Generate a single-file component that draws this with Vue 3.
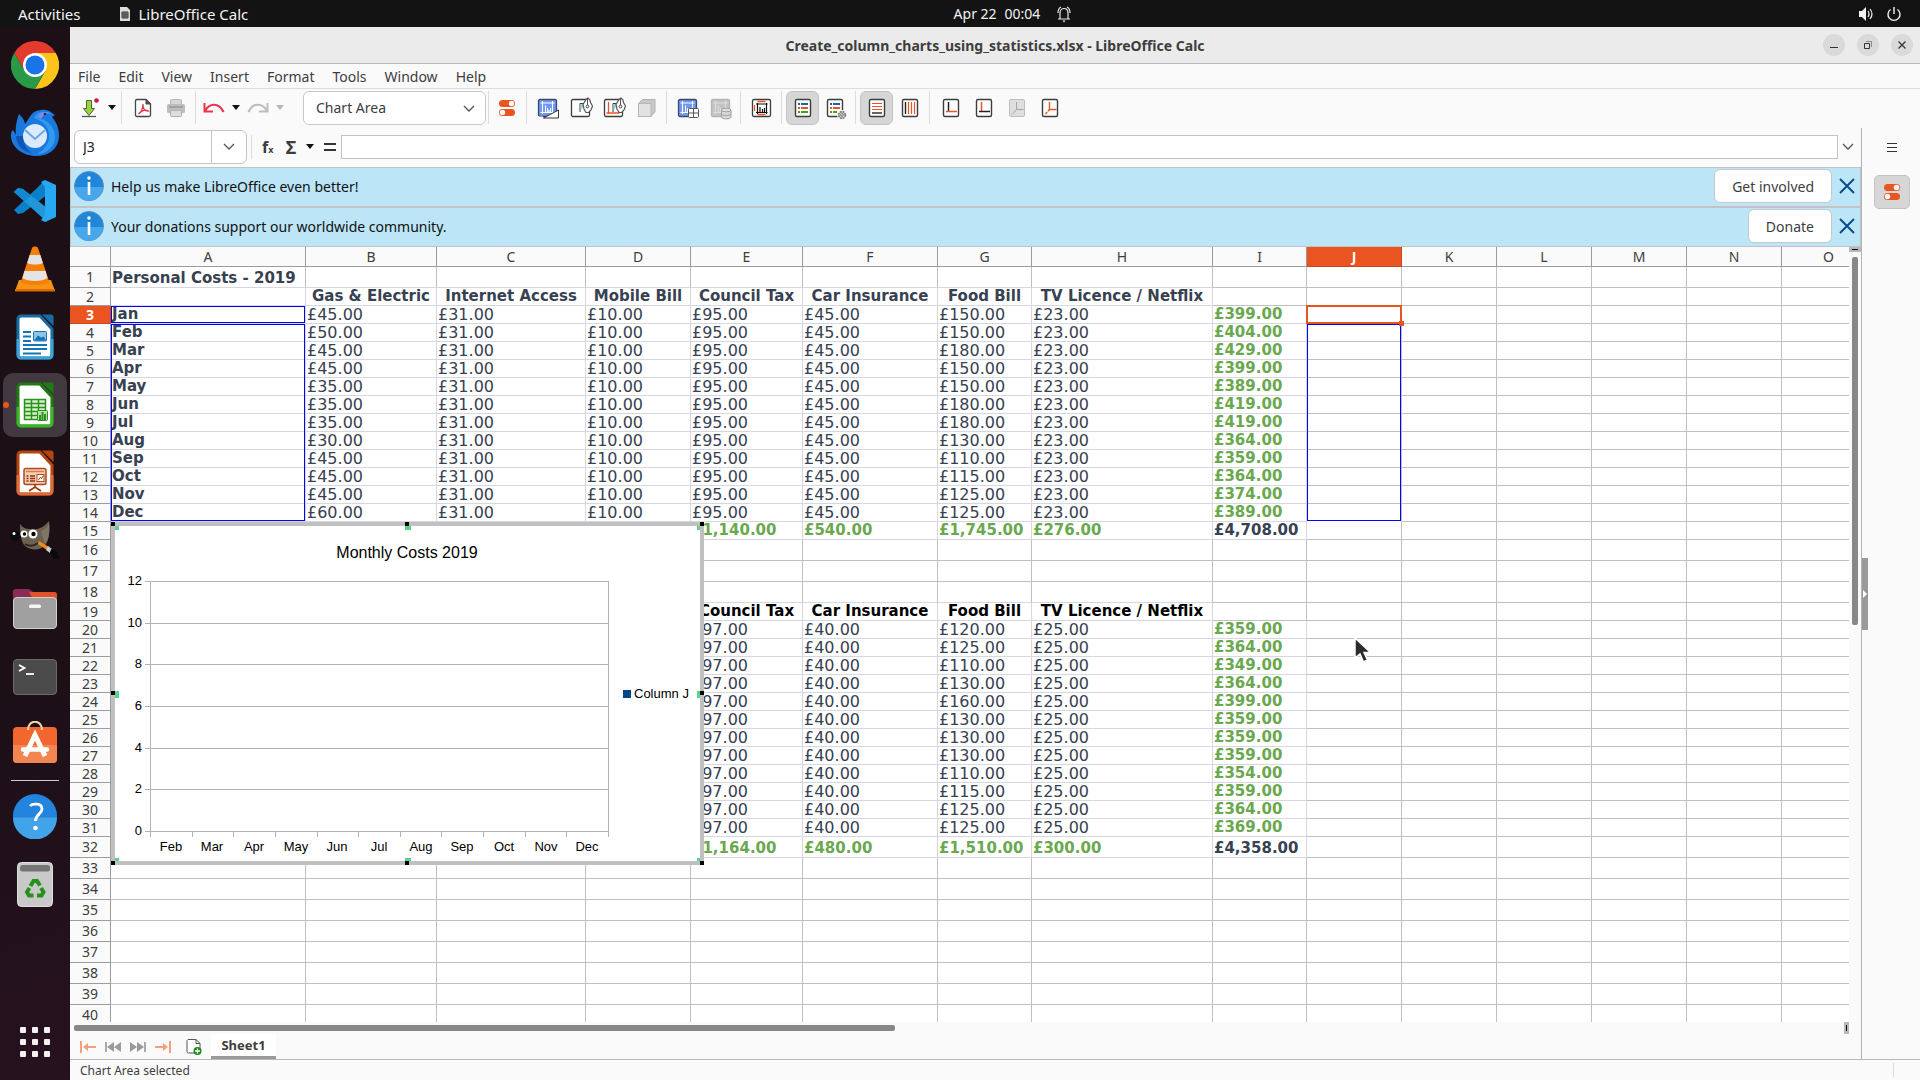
<script setup>
import { ref } from 'vue'

const cols = [
  { id: 'A', w: 195 }, { id: 'B', w: 131 }, { id: 'C', w: 149 }, { id: 'D', w: 105 },
  { id: 'E', w: 112 }, { id: 'F', w: 135 }, { id: 'G', w: 94 }, { id: 'H', w: 181 },
  { id: 'I', w: 94 }, { id: 'J', w: 95 }, { id: 'K', w: 95 }, { id: 'L', w: 95 },
  { id: 'M', w: 95 }, { id: 'N', w: 95 }, { id: 'O', w: 0 },
]

const months = ['Jan', 'Feb', 'Mar', 'Apr', 'May', 'Jun', 'Jul', 'Aug', 'Sep', 'Oct', 'Nov', 'Dec']
const gas = [45, 50, 45, 45, 35, 35, 35, 30, 45, 45, 45, 60]
const food2019 = [150, 150, 180, 150, 150, 180, 180, 130, 110, 115, 125, 125]
const total2019 = [399, 404, 429, 399, 389, 419, 419, 364, 359, 364, 374, 389]
const food2020 = [120, 125, 110, 130, 160, 130, 130, 130, 110, 115, 125, 125]
const total2020 = [359, 364, 349, 364, 399, 359, 359, 359, 354, 359, 364, 369]
const money = (n) => '£' + n.toLocaleString('en-GB') + '.00'

const sheet = {}
const put = (row, col, text, kind) => { sheet[col + row] = { text, kind } }

put(1, 'A', 'Personal Costs - 2019', 'strong')
const heads = { B: 'Gas & Electric', C: 'Internet Access', D: 'Mobile Bill', E: 'Council Tax', F: 'Car Insurance', G: 'Food Bill', H: 'TV Licence / Netflix' }
for (const c in heads) {
  put(2, c, heads[c], 'head')
  if (c >= 'E') put(19, c, heads[c], 'head black')
}
months.forEach((m, i) => {
  const r = i + 3
  put(r, 'A', m, 'strong')
  put(r, 'B', money(gas[i]))
  put(r, 'C', money(31))
  put(r, 'D', money(10))
  put(r, 'E', money(95))
  put(r, 'F', money(45))
  put(r, 'G', money(food2019[i]))
  put(r, 'H', money(23))
  put(r, 'I', money(total2019[i]), 'sum')
  const s = i + 20
  put(s, 'E', money(97))
  put(s, 'F', money(40))
  put(s, 'G', money(food2020[i]))
  put(s, 'H', money(25))
  put(s, 'I', money(total2020[i]), 'sum')
})
;[[15, 1140, 540, 1745, 276, 4708], [32, 1164, 480, 1510, 300, 4358]].forEach(([r, e, f, g, h, i]) => {
  put(r, 'E', money(e), 'sum')
  put(r, 'F', money(f), 'sum')
  put(r, 'G', money(g), 'sum')
  put(r, 'H', money(h), 'sum')
  put(r, 'I', money(i), 'strong')
})

const tall = (r) => r === 1 || (r >= 16 && r <= 18) || r >= 32
const cellClass = (r, c) => {
  const out = [sheet[c + r]?.kind]
  const body = (r >= 2 && r <= 15) || (r >= 19 && r <= 32)
  if ((c <= 'H' && body) || (c === 'I' && body && r !== 2 && r !== 19)) out.push('ruled')
  else if (c <= 'H' && (r === 1 || r === 18)) out.push('ruled-under')
  if (c === 'J' && r === 14) out.push('open-under')
  return out
}

const activeRow = 3
const activeCol = 'J'
const nameBox = ref('J3')
const formula = ref('')
const element = ref('Chart Area')

const menus = ['File', 'Edit', 'View', 'Insert', 'Format', 'Tools', 'Window', 'Help']
const notices = [
  { text: 'Help us make LibreOffice even better!', action: 'Get involved' },
  { text: 'Your donations support our worldwide community.', action: 'Donate' },
]

const plot = { left: 39, top: 59, right: 497, bottom: 309 }
const yTicks = [0, 2, 4, 6, 8, 10, 12].map((v) => ({ v, y: Math.round(plot.bottom - (v * (plot.bottom - plot.top)) / 12) }))
const step = (plot.right - plot.left) / 11
const xLabels = months.slice(1).map((m, i) => ({ m, x: Math.round(plot.left + step * (i + 0.5)) }))
const xTicks = Array.from({ length: 12 }, (_, i) => Math.round(plot.left + step * i))
const grips = ['tl', 'tc', 'tr', 'ml', 'mr', 'bl', 'bc', 'br']

const page = '<rect x="4.5" y="3.5" width="15" height="17" rx="1.5" fill="#fff" stroke="#3d3d3d" stroke-width="1.4"/>'
const wide = (f, s) => `<rect x="2.5" y="3.5" width="18" height="17" rx="1.5" fill="${f}" stroke="${s}" stroke-width="1.3"/>`
const bars = (s) => `<path d="M6.500 5v13M16.500 5v13M4.500 7h14M4.500 16.500h14M9.500 16V9.500M11.500 16v-4M13 16v-2M14.500 16v-4" fill="none" stroke="${s}" stroke-width="1.100"/>`
const pen = '<path d="M11 16V7.500h4" fill="none" stroke="#3d3d3d"/><path d="M11.500 8h4l-3.500 6z" fill="#8fd6f2"/><path d="M14 8.500l3-5 2-1.500 2 2 .5 2.500 2 3.500-1.500 4-2.500 2.500h-2.500l-2-3.500z" fill="#fff" stroke="#555" stroke-width="1.200"/><path d="M18.500 3v6" stroke="#555"/><circle cx="18.500" cy="10.500" r="1.400" fill="#fff" stroke="#444"/>'
const icons = {
  save: '<path d="M9.500 4.500h5v8h3L12 19.500 6.500 12.500h3z" fill="#9bd143" stroke="#4c6a2b"/><path d="M5 20.500h14" stroke="#555" stroke-width="1.300"/><circle cx="19.500" cy="4.500" r="2.300" fill="#d6143c"/>',
  pdf: '<path d="M6 3.500h9l4.500 4.500V19a1.500 1.500 0 0 1-1.500 1.500H6A1.500 1.500 0 0 1 4.500 19V5A1.500 1.500 0 0 1 6 3.500z" fill="#fff" stroke="#444" stroke-width="1.300"/><path d="M15 3.500v4.500h4.500z" fill="#555" stroke="#444"/><path d="M7.500 18c2-1 4.500-5 4.500-10 0 5 2 7.500 5.500 7-3-1.500-7-.5-10 3z" fill="none" stroke="#e8364f" stroke-width="1.200"/>',
  print: '<rect x="6.500" y="3.500" width="11" height="5" rx="1" fill="#d6d6d6" stroke="#b5b5b5"/><rect x="3" y="8" width="18" height="9" rx="1.500" fill="#bdbdbd"/><path d="M5 11h14" stroke="#999" stroke-width="1.500"/><rect x="6.500" y="14.500" width="11" height="6" rx="1" fill="#dedede" stroke="#b0b0b0"/>',
  undo: '<path d="M2.500 7v8.500H11" fill="none" stroke="#e8364f" stroke-width="2"/><path d="M3 15c4-8 14-9 18.500 1" fill="none" stroke="#e8364f" stroke-width="2.200"/>',
  redo: '<path d="M21.500 7v8.500H13" fill="none" stroke="#bdbdbd" stroke-width="2"/><path d="M21 15c-4-8-14-9-18.500 1" fill="none" stroke="#bdbdbd" stroke-width="2.200"/>',
  toggles: '<rect x="4" y="4" width="16" height="7" rx="3.500" fill="#e95420"/><rect x="4" y="13" width="16" height="7" rx="3.500" fill="#e95420"/><circle cx="16.500" cy="7.500" r="2.700" fill="#fff"/><circle cx="7.500" cy="16.500" r="2.700" fill="#fff"/>',
  format: wide('#6f97f2', '#3a4a6b') + bars('#fff') + '<path d="M22.500 14v8h-15z" fill="#fff" stroke="#333"/><path d="M2 21.500h5" stroke="#fafafa" stroke-width="2"/>',
  type: wide('#fff', '#3d3d3d') + pen,
  area: wide('#fff', '#3d3d3d') + '<path d="M6.500 6v12M4.500 17h13" stroke="#e95420" stroke-width="1.300"/>' + pen,
  cube: '<path d="M3.500 7.500l4-4h12.500v12l-4 5H3.500z" fill="#c9c9c9" stroke="#b0b0b0"/><rect x="3.500" y="7.500" width="12.500" height="13" fill="#e2e2e2" stroke="#b5b5b5"/>',
  data: wide('#6f97f2', '#3a4a6b') + bars('#fff') + '<rect x="12.500" y="12.500" width="10" height="9" rx="1" fill="#fff" stroke="#555"/><path d="M17.500 12.500v9M12.500 17h10" stroke="#555"/>',
  source: wide('#c4c4c4', '#b5b5b5') + bars('#dedede') + '<path d="M12.500 14v7c0 2.500 9.500 2.500 9.500 0v-7" fill="#d8d8d8" stroke="#a0a0a0"/><ellipse cx="17.200" cy="14" rx="4.800" ry="1.800" fill="#e0e0e0" stroke="#a0a0a0"/><path d="M12.500 18c1 2 8.500 2 9.500 0" fill="none" stroke="#a0a0a0"/>',
  titles: wide('#fff', '#3d3d3d') + '<path d="M7.500 5.500h8M4.500 9v6M7.500 18.500h8" stroke="#e95420" stroke-width="1.300"/><path d="M6 8h11.500M6 16.500h11.500M7.500 7v11M16.500 7v11" stroke="#111" stroke-width="1.200"/><path d="M10 16v-5M12.500 16v-3M14.500 16v-4" stroke="#111" stroke-width="1.200"/>',
  legend: page + '<path d="M7 8h2M10 8h7" stroke="#1268a8" stroke-width="2"/><path d="M7 12h2M10 12h7" stroke="#e95420" stroke-width="2"/><path d="M7 16h2M10 16h7" stroke="#43a316" stroke-width="2"/>',
  legendset: '<g transform="translate(-1 0)">' + page + '<path d="M7 8h2M10 8h7" stroke="#1268a8" stroke-width="2"/><path d="M7 12h2M10 12h7" stroke="#e95420" stroke-width="2"/><path d="M7 16h2M10 16h4" stroke="#43a316" stroke-width="2"/><circle cx="19" cy="19" r="5" fill="#fafafa"/><circle cx="19" cy="19" r="3.400" fill="#ccc" stroke="#777" stroke-width="1.600" stroke-dasharray="1.800 .9"/><circle cx="19" cy="19" r="1.300" fill="#fff" stroke="#777"/></g>',
  hgrid: page + '<path d="M7 7.500h10M7 10.500h10M7 13.500h10" stroke="#e95420" stroke-width="1.200"/><path d="M7 17h10" stroke="#222" stroke-width="1.400"/>',
  vgrid: page + '<path d="M10.500 6v12M13.500 6v12M16.500 6v12" stroke="#e95420" stroke-width="1.200"/><path d="M7.500 6v12" stroke="#222" stroke-width="1.400"/>',
  xaxis: page + '<path d="M9.500 6v9" stroke="#222" stroke-width="1.500"/><path d="M7 15.500h11" stroke="#e95420" stroke-width="1.500"/>',
  yaxis: page + '<path d="M9.500 6v9" stroke="#e95420" stroke-width="1.500"/><path d="M7 15.500h11" stroke="#222" stroke-width="1.500"/>',
  zaxis: '<rect x="4.500" y="3.500" width="15" height="17" rx="1.500" fill="#dedede" stroke="#bdbdbd"/><path d="M11.500 6v7.500h7M11.500 13.500L7 18.500" fill="none" stroke="#a5a5a5"/>',
  allaxes: page + '<path d="M11.500 6v7.500h7" fill="none" stroke="#e95420" stroke-width="1.400"/><path d="M11.500 13.500L7 18.500" stroke="#e95420" stroke-width="1.500" stroke-dasharray="2.500 1"/>',
}

const tools = [
  { icon: 'toggles', label: 'Properties' }, 'sep',
  { icon: 'format', label: 'Format selection' }, { icon: 'type', label: 'Chart type' }, { icon: 'area', label: 'Chart area' }, { icon: 'cube', label: '3D view', off: true }, 'sep',
  { icon: 'data', label: 'Data table' }, { icon: 'source', label: 'Data ranges', off: true }, 'sep',
  { icon: 'titles', label: 'Titles' }, 'sep',
  { icon: 'legend', label: 'Legend on/off', on: true }, { icon: 'legendset', label: 'Legend' }, 'sep',
  { icon: 'hgrid', label: 'Horizontal grids', on: true }, { icon: 'vgrid', label: 'Vertical grids' }, 'sep',
  { icon: 'xaxis', label: 'X axis' }, { icon: 'yaxis', label: 'Y axis' }, { icon: 'zaxis', label: 'Z axis', off: true }, { icon: 'allaxes', label: 'All axes' },
]

const doc = (a, b) => `<path d="M10 3h19l12 13v26a3 3 0 0 1-3 3H10a3 3 0 0 1-3-3V6a3 3 0 0 1 3-3z" fill="#fff" stroke="${a}" stroke-width="3"/><path d="M7 26v16a3 3 0 0 0 3 3h28a3 3 0 0 0 3-3V26" fill="none" stroke="${b}" stroke-width="3"/><path d="M31 1.500h9a2.500 2.500 0 0 1 2.500 2.500v9z" fill="${a}"/>`
const dock = [
  { name: 'Google Chrome', art: '<path d="M3.200 12A24 24 0 0 1 44.800 12H24L13.600 30z" fill="#e33b2e"/><path d="M44.800 12A24 24 0 0 1 24 48l10.400-18L24 12z" fill="#fcc419"/><path d="M24 48A24 24 0 0 1 3.200 12l10.400 18h20.800z" fill="#2a9a48"/><circle cx="24" cy="24" r="12" fill="#fff"/><circle cx="24" cy="24" r="9.500" fill="#1a73e8"/>' },
  { name: 'Thunderbird', art: '<path d="M8 5c3 3 5 5 6 10C20 7 20 2 30 1c5-1 9 1 11 3l3 2-3 2c5 6 7 12 7 18 0 14-10 21-23 21S0 38 0 27c0-4 1-5 2-6l3 5C4 18 6 10 8 5z" fill="#1b78dc"/><path d="M23 9c3-7 11-8 17-4-6-1-9 1-10 5 8 2 15 10 14 19-1 10-9 16-18 16 9-5 13-12 12-20-1-8-6-13-15-16z" fill="#2f9bf0"/><path d="M27 8c2-5 7-6 12-4-5 0-7 2-8 5z" fill="#8d86e8"/><path d="M5 27c0 10 8 16 16 17-5-3-9-9-9-17z" fill="#0d56b8"/><circle cx="24" cy="27" r="12" fill="#dcebfc"/><path d="M14 21l10 9 10-9" fill="none" stroke="#6ba7e6" stroke-width="2"/><circle cx="34" cy="5" r="1.300" fill="#0b2e6b"/>' },
  { name: 'Visual Studio Code', art: '<path d="M34 3l-9 9L3 33l4 4 5-1 24-18z" fill="#0a80c8"/><path d="M3 15l4-4 5 1 24 19v14z" fill="#2196d8"/><path d="M3 15l4-4 5 1 8 7-6 5z" fill="#1288d0"/><path d="M34 3l11 5v32l-11 5-4-2 4-5V10l-4-5z" fill="#28a8f0"/>' },
  { name: 'VLC media player', art: '<path d="M8 35h32l4 11H4z" fill="#f79414"/><path d="M4 44h40v2.500H4z" fill="#d96b00"/><path d="M21 3c1-2 5-2 6 0l11 33c0 5-28 5-28 0z" fill="#f57f0a"/><path d="M18.700 10h10.600l2.500 8c-4 2-11 2-15.600 0z" fill="#e4e4e4"/><path d="M13.500 26h21l2 7c-5 4-20 4-25 0z" fill="#e4e4e4"/>' },
  { name: 'LibreOffice Writer', art: doc('#156ca3', '#3aa2dc') + '<path d="M12 19h8M12 23.500h8M12 28h8M12 32h24M12 36h24M12 40.500h18" stroke="#1473b5" stroke-width="2"/><rect x="22.500" y="18.500" width="13" height="9.500" rx="1" fill="#8ec7e6" stroke="#1473b5"/><path d="M23 27.500l4-5 3 2 3-1 2 4z" fill="#1473b5"/>' },
  { name: 'LibreOffice Calc', active: true, art: doc('#1d7c0f', '#3cb52b') + '<path d="M13.500 18.500h21v20h-21zM20.500 18v20M27.500 18v20M13 22.500h21M13 26.500h21M13 30.500h21M13 34.500h21" fill="#d5efce" stroke="#2a921a" stroke-width="1.500"/><rect x="26.500" y="29.500" width="10" height="10" rx="1" fill="#b6e2a8" stroke="#2a921a"/><path d="M29 39v-5M31.500 39v-8M34 39v-6" stroke="#2a921a" stroke-width="2"/>' },
  { name: 'LibreOffice Impress', art: doc('#b5440f', '#e06a38') + '<rect x="13" y="19.500" width="22" height="16" rx="2" fill="#f3cdb9" stroke="#b04a1c" stroke-width="1.500"/><path d="M15 22.500h18" stroke="#e07a45" stroke-width="1.500"/><path d="M15.500 27h2M19 27h5M15.500 29.500h2M19 29.500h5M15.500 32h2M19 32h5" stroke="#8f3408" stroke-width="1.500"/><rect x="26" y="25.500" width="7" height="7" fill="#fff" stroke="#b04a1c"/><path d="M27.500 31l2-3 1 1.500 2-3" fill="none" stroke="#b04a1c"/><path d="M24 35v3M18 42l6-4 6 4" fill="none" stroke="#a03c0d" stroke-width="1.800"/>' },
  { name: 'GIMP', art: '<path d="M9 7c3 4 6 5 10 5 8 1 13-1 19-8 1 12 0 18-3 23-5 7-15 7-21 2-4-4-5-12-5-22z" fill="#6b6252"/><path d="M30 14c4-1 7-4 8-9 1 9 0 17-4 22z" fill="#7f7665"/><circle cx="4.500" cy="19" r="5" fill="#0c0c0c"/><circle cx="3" cy="16.500" r="1.500" fill="#fff"/><circle cx="13" cy="17" r="3.500" fill="#fff"/><circle cx="22" cy="17" r="4.500" fill="#fff"/><circle cx="13.500" cy="17" r="1.700"/><circle cx="22.500" cy="17" r="2.200"/><path d="M14 27c5 3 9 2 13-1" fill="none" stroke="#2b261e" stroke-width="2"/><path d="M28 24l10 6-2 3-9-6z" fill="#f08c1e"/><path d="M37 29l4 3-2 4-4-3z" fill="#ccc"/><path d="M40 32c5 1 8 5 8 10-5 0-8-3-9-6z" fill="#0a0a0a"/>' },
  { name: 'Files', art: '<path d="M2 14V7a3 3 0 0 1 3-3h13l4 3h21a3 3 0 0 1 3 3v8H2z" fill="#8c2c56"/><path d="M18 7h25a3 3 0 0 1 3 3v8H24z" fill="#e2522a"/><rect x="2.500" y="12.500" width="43" height="31" rx="3.500" fill="#a0a0a0" stroke="#cfcfcf"/><rect x="18" y="19.500" width="12" height="3.500" rx="1.500" fill="#f5f5f5"/>' },
  { name: 'Terminal', art: '<rect x="2.500" y="6.500" width="43" height="35" rx="3.500" fill="#4b4b4b" stroke="#6a6a6a"/><path d="M8 12l5.500 3L8 18" fill="none" stroke="#fff" stroke-width="1.800"/><path d="M15 21h8" stroke="#fff" stroke-width="1.800"/>' },
  { name: 'Ubuntu Software', art: '<rect x="2" y="6" width="44" height="36" rx="4" fill="#f2662f"/><path d="M2 24h44v14a4 4 0 0 1-4 4H6a4 4 0 0 1-4-4z" fill="#f58550"/><path d="M17 9c0-11 14-11 14 0" fill="none" stroke="#f6d5ab" stroke-width="2"/><path d="M14 35L24 14l10 21" fill="none" stroke="#fff" stroke-width="5"/><path d="M12 28.500h24" stroke="#fff" stroke-width="4.500" stroke-linecap="round"/>' },
  { name: 'Help', divider: true, art: '<circle cx="24" cy="25" r="22" fill="#2284dc"/><path d="M2 26.500a22 22 0 0 0 44 0z" fill="#41a3e8"/><path d="M19 15c2-2.500 12-3.500 12 3 0 5-6.500 5-6.500 12" fill="none" stroke="#fff" stroke-width="2.800"/><circle cx="24.500" cy="37" r="2.300" fill="#fff"/>' },
  { name: 'Trash', art: '<g transform="translate(0 1)"><rect x="6.500" y="2.500" width="35" height="44" rx="4" fill="#c9c9c9" stroke="#e0e0e0"/><rect x="9" y="5" width="30" height="6.500" rx="2.500" fill="#757575"/><g fill="none" stroke="#26901c" stroke-width="4"><path d="M19.500 26l3-5h3.500l3 4.500"/><path d="M30 28l2.500 4-2 3.500H26"/><path d="M22.500 35.500H18l-2-3.500 2.500-4"/></g></g>' },
]
</script>

<template>
  <div class="desktop">
    <header class="topbar">
      <div class="top-left">
        <button class="activities">Activities</button>
        <button class="app-menu">
          <svg width="16" height="16" viewBox="0 0 16 16"><path d="M3 1h7l3 3v11H3z" fill="#ddd" /><path d="M5 6h6v6H5zM5 8h6M5 10h6M7 6v6M9 6v6" fill="none" stroke="#333" /></svg>
          LibreOffice Calc
        </button>
      </div>
      <button class="clock"><span>Apr 22</span><span>00:04</span>
        <svg width="16" height="18" viewBox="0 0 16 18"><path d="M2 14h12M4 13.500V8c0-6 8-6 8 0v5.500M2 8c0-3 1-5 3-6M14 8c0-3-1-5-3-6" fill="none" stroke="#e8e8e8" stroke-width="1.200" /><path d="M6.500 15.500h3L8 17.500z" fill="#e8e8e8" /></svg>
      </button>
      <div class="top-right">
        <svg width="16" height="16" viewBox="0 0 16 16"><path d="M1 5h3l4-4v14l-4-4H1z" fill="#f2f2f2" /><path d="M10 5q2 3 0 6M12 3q4 5 0 10" fill="none" stroke="#f2f2f2" stroke-width="1.200" /></svg>
        <svg width="16" height="16" viewBox="0 0 16 16"><path d="M4.500 3.500a6 6 0 1 0 7 0M8 1v7" fill="none" stroke="#f2f2f2" stroke-width="1.400" /></svg>
      </div>
    </header>

    <div class="workspace">
      <nav class="dock" aria-label="Dock">
        <template v-for="d in dock" :key="d.name">
          <hr v-if="d.divider" />
          <button :class="{ active: d.active }" :aria-label="d.name">
            <svg width="48" height="48" viewBox="0 0 48 48" v-html="d.art"></svg>
          </button>
        </template>
        <button class="apps" aria-label="Show applications"><i v-for="n in 9" :key="n"></i></button>
      </nav>

      <div class="window">
        <div class="titlebar">
          <h1>Create_column_charts_using_statistics.xlsx - LibreOffice Calc</h1>
          <div class="controls">
            <button aria-label="Minimize"><svg width="10" height="10"><path d="M1 7.500h8" stroke="#333" /></svg></button>
            <button aria-label="Restore"><svg width="10" height="10"><path d="M1.500 3.500h5v5h-5z" fill="none" stroke="#333" /><path d="M3 1.500h5.500V7" fill="none" stroke="#888" /></svg></button>
            <button aria-label="Close"><svg width="10" height="10"><path d="M1.500 1.500l7 7M8.500 1.500l-7 7" stroke="#333" stroke-width="1.300" /></svg></button>
          </div>
        </div>

        <nav class="menubar"><button v-for="m in menus" :key="m">{{ m }}</button></nav>

        <div class="toolbar">
          <button class="tool w32" aria-label="Save"><svg width="24" height="24" v-html="icons.save"></svg></button>
          <button class="drop w13" aria-label="Save options"></button>
          <span class="sep"></span>
          <button class="tool" aria-label="Export as PDF"><svg width="24" height="24" v-html="icons.pdf"></svg></button>
          <button class="tool" aria-label="Print"><svg width="24" height="24" v-html="icons.print"></svg></button>
          <span class="sep"></span>
          <button class="tool w28" aria-label="Undo"><svg width="24" height="24" v-html="icons.undo"></svg></button>
          <button class="drop w16" aria-label="Undo steps"></button>
          <button class="tool w28" aria-label="Redo"><svg width="24" height="24" v-html="icons.redo"></svg></button>
          <button class="drop w16 off" aria-label="Redo steps"></button>
          <div class="combo">
            <select v-model="element" aria-label="Chart element"><option>Chart Area</option></select>
            <svg width="12" height="8"><path d="M1 1l5 5 5-5" fill="none" stroke="#555" stroke-width="1.300" /></svg>
          </div>
          <span class="sep close"></span>
          <template v-for="(t, i) in tools" :key="i">
            <span v-if="t === 'sep'" class="sep"></span>
            <button v-else class="tool" :class="{ on: t.on }" :disabled="t.off" :aria-label="t.label">
              <svg width="24" height="24" v-html="icons[t.icon]"></svg>
            </button>
          </template>
        </div>

        <div class="content">
          <main>
            <div class="formulabar">
              <div class="namebox">
                <input v-model="nameBox" aria-label="Name box" />
                <button aria-label="Names"><svg width="12" height="8"><path d="M1 1l5 5 5-5" fill="none" stroke="#555" stroke-width="1.300" /></svg></button>
              </div>
              <span class="sep thin"></span>
              <button class="fx" aria-label="Function wizard">f<small>x</small></button>
              <button class="sigma" aria-label="Select function">Σ</button>
              <button class="drop w16" aria-label="More functions"></button>
              <button class="equals" aria-label="Formula"><i></i><i></i></button>
              <input v-model="formula" class="formula" aria-label="Formula input" />
              <button class="expand" aria-label="Expand formula bar"><svg width="12" height="8"><path d="M1 1l5 5 5-5" fill="none" stroke="#555" stroke-width="1.300" /></svg></button>
            </div>

            <div v-for="n in notices" :key="n.action" class="notice">
              <svg width="30" height="30" viewBox="0 0 30 30"><circle cx="15" cy="15" r="14.500" fill="#1f86da" stroke="#5f8fb5" /><path d="M1 16a14 14 0 0 0 28 0z" fill="#48a6ea" /><circle cx="15" cy="7" r="1.800" fill="#fff" /><path d="M15 11v13" stroke="#fff" stroke-width="2.600" /></svg>
              <p>{{ n.text }}</p>
              <button class="act">{{ n.action }}</button>
              <button class="dismiss" aria-label="Close"><svg width="16" height="16"><path d="M1 1l14 14M15 1L1 15" stroke="#0c4c86" stroke-width="2" /></svg></button>
            </div>

            <div class="gridrow">
              <div class="grid">
                <table>
                  <colgroup>
                    <col class="rowhead" />
                    <col v-for="c in cols" :key="c.id" :style="c.w ? { width: c.w + 'px' } : null" />
                  </colgroup>
                  <thead>
                    <tr>
                      <th></th>
                      <th v-for="c in cols" :key="c.id" :class="{ cur: c.id === activeCol }" scope="col">{{ c.id }}</th>
                    </tr>
                  </thead>
                  <tbody>
                    <tr v-for="r in 40" :key="r" :class="{ tall: tall(r) }">
                      <th :class="{ cur: r === activeRow }" scope="row">{{ r }}</th>
                      <td v-for="c in cols" :key="c.id" :class="cellClass(r, c.id)">{{ sheet[c.id + r]?.text }}</td>
                    </tr>
                  </tbody>
                </table>

                <div class="range a-first"></div>
                <div class="range a-rest"></div>
                <div class="range j-rest"></div>
                <div class="cursor"><i></i></div>

                <div class="chart">
                  <svg width="585" height="335" role="img" aria-label="Monthly Costs 2019">
                    <text x="292" y="32" text-anchor="middle" font-size="16">Monthly Costs 2019</text>
                    <g shape-rendering="crispEdges" stroke="#b3b3b3" fill="none" transform="translate(-4 -4)">
                      <path v-for="t in yTicks" :key="t.v" :d="`M${plot.left - 5} ${t.y + .5}H${plot.right}`" />
                      <path :d="`M${plot.left + .5} ${plot.top}V${plot.bottom}M${plot.right + .5} ${plot.top}V${plot.bottom}`" />
                      <path v-for="x in xTicks" :key="x" :d="`M${x + .5} ${plot.bottom}v6`" />
                    </g>
                    <g font-size="13" transform="translate(-4 -4)">
                      <text v-for="t in yTicks" :key="t.v" x="31" :y="t.y + 4" text-anchor="end">{{ t.v }}</text>
                      <text v-for="l in xLabels" :key="l.m" :x="l.x" y="329" text-anchor="middle">{{ l.m }}</text>
                      <rect x="512" y="168" width="8" height="8" fill="#004586" />
                      <text x="523" y="176">Column J</text>
                    </g>
                  </svg>
                  <i v-for="g in grips" :key="g" class="grip" :class="g"></i>
                  <i v-for="g in grips" :key="'o' + g" class="handle" :class="g"></i>
                </div>

                <svg class="pointer" width="20" height="28" viewBox="0 0 20 28"><path d="M2 2v20l5-4 3.500 8 4-2-3.500-7.500h6.500z" fill="#2b2b2b" stroke="#fff" stroke-width="1.500" /></svg>
              </div>
              <div class="vscroll"><i class="split"></i><i class="thumb"></i></div>
            </div>

            <div class="hscroll"><i class="thumb"></i><i class="split"></i></div>

            <div class="tabs">
              <button aria-label="First sheet"><svg width="16" height="12"><path d="M1 0v12" stroke="#f5a07c" stroke-width="2" /><path d="M16 6H7" stroke="#f5a07c" stroke-width="2" /><path d="M3 6l5-4v8z" fill="#f5a07c" /></svg></button>
              <button aria-label="Previous sheet"><svg width="16" height="12"><path d="M1 1v10" stroke="#8f8f8f" stroke-width="1.500" /><path d="M9 1v10L2 6zM16 1v10L9 6z" fill="#9a9a9a" /></svg></button>
              <button aria-label="Next sheet"><svg width="16" height="12"><path d="M15 1v10" stroke="#8f8f8f" stroke-width="1.500" /><path d="M0 1v10l7-5zM7 1v10l7-5z" fill="#9a9a9a" /></svg></button>
              <button aria-label="Last sheet"><svg width="16" height="12"><path d="M15 0v12" stroke="#f5a07c" stroke-width="2" /><path d="M0 6h9" stroke="#f5a07c" stroke-width="2" /><path d="M13 6L8 2v8z" fill="#f5a07c" /></svg></button>
              <button class="add" aria-label="Add sheet"><svg width="16" height="18"><path d="M2 1.500h8l4 4V15H2.500a1.500 1.500 0 0 1-1.500-1.500v-11z" fill="#fff" stroke="#555" /><path d="M10 1.500v4h4" fill="none" stroke="#555" /><circle cx="11.500" cy="13" r="4" fill="#1c8a1c" /><path d="M9 13h5M11.500 10.500v5" stroke="#fff" stroke-width="1.300" /></svg></button>
              <button class="tab">Sheet1</button>
            </div>
          </main>

          <aside>
            <button class="burger" aria-label="Sidebar settings"><i></i><i></i><i></i></button>
            <button class="panel" aria-label="Properties"><svg width="24" height="24" v-html="icons.toggles"></svg></button>
            <button class="collapse" aria-label="Hide sidebar"></button>
          </aside>
        </div>

        <footer><span>Chart Area selected</span><i></i></footer>
      </div>
    </div>
  </div>
</template>

<style>
html, body { margin: 0; }
</style>

<style scoped>
* { box-sizing: border-box; }
button, input, select { font: inherit; color: inherit; border: 0; margin: 0; padding: 0; background: none; outline: none; }
button svg { display: block; }
h1, p { margin: 0; }
i { display: block; }

.desktop { height: 100vh; display: flex; flex-direction: column; overflow: hidden; font-family: "Noto Sans", "Open Sans", sans-serif; font-size: 14px; color: #3d3d3d; background: #fafafa; }

.topbar { height: 27px; flex: none; display: grid; grid-template-columns: 1fr auto 1fr; align-items: center; background: #131313; color: #f2f2f2; }
.top-left { display: flex; gap: 36px; padding-left: 18px; font-size: 15px; line-height: 20px; }
.app-menu { display: flex; align-items: center; gap: 6px; }
.clock { display: flex; align-items: center; gap: 8px; padding-left: 106px; }
.clock svg { margin-left: 8px; }
.top-right { display: flex; justify-content: flex-end; gap: 12px; padding-right: 18px; }

.workspace { flex: 1; min-height: 0; display: flex; }
.dock { width: 70px; flex: none; display: flex; flex-direction: column; align-items: center; gap: 4px; padding: 6px 0; background: linear-gradient(160deg, #1c0f16 60%, #26121f); }
.dock button { width: 64px; height: 64px; flex: none; display: grid; place-items: center; border-radius: 10px; position: relative; }
.dock .active { background: #413840; }
.dock .active::before { content: ""; position: absolute; left: 0; top: 29px; width: 6px; height: 6px; border-radius: 50%; background: #e95420; }
.dock hr { width: 48px; height: 1px; border: 0; margin: -1px 0 -2px; background: #cfc9cc; flex: none; }
.dock .apps { margin-top: auto; grid-template-columns: repeat(3, 6px); grid-auto-rows: 6px; gap: 6px; place-content: center; }
.apps i { width: 6px; height: 6px; border-radius: 1px; background: #f2f0f1; }

.window { flex: 1; min-width: 0; display: flex; flex-direction: column; }
.titlebar { height: 37px; flex: none; display: grid; grid-template-columns: 1fr auto 1fr; align-items: center; background: #ebebeb; border-bottom: 1px solid #b8b8b8; }
.titlebar h1 { grid-column: 2; font-size: 14px; font-weight: 700; }
.controls { display: flex; justify-content: flex-end; gap: 12px; padding-right: 7px; }
.controls button { width: 22px; height: 22px; border-radius: 50%; display: grid; place-items: center; background: #dadada; }
.menubar { height: 25px; flex: none; display: flex; gap: 18px; padding-left: 8px; border-bottom: 1px solid #dcdcdc; }

.toolbar { height: 39px; flex: none; display: flex; align-items: center; padding: 0 0 2px 3px; }
.tool { width: 33px; height: 34px; flex: none; display: grid; place-items: center; border-radius: 6px; }
.tool.on, .panel { background: #d6d6d6; border: 1px solid #c3c3c3; }
.sep { width: 1px; height: 33px; margin: 0 4px 0 3px; background: #dcdcdc; flex: none; }
.sep.close { margin: 0 1px 0 2px; }
.w32 { width: 32px; }
.w28 { width: 28px; }
.w16 { width: 16px; }
.w13 { width: 13px; }
.drop { height: 34px; display: grid; place-items: center; color: #111; flex: none; }
.drop::after { content: ""; border: 4px solid transparent; border-top: 5px solid currentColor; border-bottom: 0; }
.drop.off { color: #b8b8b8; }
.combo { width: 183px; height: 34px; margin-left: 15px; position: relative; flex: none; }
.combo select { width: 100%; height: 100%; appearance: none; padding: 0 12px; border: 1px solid #c8c8c8; border-radius: 6px; background: #fff; }
.combo svg { position: absolute; right: 11px; top: 14px; pointer-events: none; }

.content { flex: 1; min-height: 0; display: flex; }
main { flex: 1; min-width: 0; display: flex; flex-direction: column; }
aside { width: 59px; flex: none; border-left: 1px solid #b3b3b3; position: relative; display: flex; flex-direction: column; align-items: center; padding-left: 1px; }
.burger { height: 38px; width: 36px; display: grid; align-content: center; justify-content: center; gap: 3px; margin-bottom: 9px; }
.burger i { width: 10px; height: 1px; background: #333; }
.panel { width: 36px; height: 34px; border-radius: 5px; display: grid; place-items: center; }
.collapse { position: absolute; left: 0; top: 430px; width: 6px; height: 72px; background: #9a9a9a; }
.collapse::after { content: ""; position: absolute; left: 1px; top: 32px; border: 4px solid transparent; border-left-color: #fff; border-right: 0; }

.formulabar { height: 39px; flex: none; display: flex; align-items: center; padding: 0 0 2px 4px; }
.namebox { width: 173px; height: 34px; display: flex; border: 1px solid #c3c3c3; border-radius: 6px; background: #fff; color: #222; flex: none; }
.namebox input { flex: 1; min-width: 0; padding-left: 8px; }
.namebox button { width: 35px; border-left: 1px solid #c3c3c3; display: grid; place-items: center; }
.sep.thin { height: 24px; margin: 0 10px 0 4px; }
.fx { width: 18px; font-weight: 700; font-size: 16px; text-align: left; }
.fx small { font-size: 9px; }
.sigma { width: 22px; font-weight: 700; font-size: 18px; line-height: 20px; }
.equals { width: 23px; height: 24px; display: grid; align-content: center; justify-content: center; gap: 4px; }
.equals i { width: 12px; height: 2px; background: #333; }
.formula { flex: 1; height: 24px; border: 1px solid #c3c3c3; background: #fff; }
.expand { width: 20px; margin-right: 3px; display: grid; place-items: center; }

.notice { height: 40px; flex: none; display: flex; align-items: center; gap: 7px; padding: 0 5px 2px 3px; background: #bce5f7; border: 1px solid #c3c3c3; color: #111; }
.notice p { flex: 1; }
.act { height: 34px; padding: 0 17px; border: 1px solid #c8c8c8; border-radius: 6px; background: #fff; color: #3d3d3d; }

.gridrow { flex: 1; min-height: 0; display: flex; }
.grid { flex: 1; min-width: 0; position: relative; overflow: hidden; background: #fff; }
table { width: calc(100% + 27px); table-layout: fixed; border-collapse: separate; border-spacing: 0; }
.rowhead { width: 41px; }
tr { height: 18px; }
tr.tall { height: 21px; }
thead tr { height: 20px; }
th { padding: 0; font-weight: 400; font-size: 14px; line-height: 16px; background: #fafafa; border: solid #9c9c9c; border-width: 0 1px 1px 0; }
th.cur { background: #e95420; border-color: #c9481b; color: #fff; font-weight: 700; }
td { padding: 0 1px; line-height: 17px; vertical-align: bottom; white-space: nowrap; border: solid #c0c0c0; border-width: 0 1px 1px 0; font-family: "DejaVu Sans", sans-serif; font-size: 16px; color: #374151; }
td.ruled { border-color: #d7d7e3; }
td.ruled-under { border-bottom-color: #d7d7e3; }
td.open-under { border-bottom-color: #fff; }
td.strong, td.head, td.sum { font-weight: 700; font-size: 15px; }
td.head { text-align: center; }
td.black { color: #000; }
td.sum { color: #6aa84f; }

.range { position: absolute; border: 1px solid #0000ff; }
.a-first { left: 41px; top: 59px; width: 194px; height: 17px; }
.a-rest { left: 41px; top: 77px; width: 194px; height: 197px; }
.j-rest { left: 1237px; top: 77px; width: 94px; height: 197px; }
.cursor { position: absolute; left: 1236px; top: 58px; width: 96px; height: 19px; border: 2px solid #e95420; }
.cursor i { position: absolute; right: -4px; bottom: -4px; width: 5px; height: 5px; background: #e95420; }

.chart { position: absolute; left: 41px; top: 275px; width: 593px; height: 343px; border: 4px solid #c0c0c0; background: #fff; }
.chart svg { display: block; font-family: "Liberation Sans", Arial, sans-serif; }
.grip, .handle { position: absolute; width: 4px; height: 4px; }
.handle { background: #000; }
.grip { background: #56d58c; }
.handle.tl, .handle.tc, .handle.tr { top: -4px; }
.handle.bl, .handle.bc, .handle.br { bottom: -4px; }
.handle.tl, .handle.ml, .handle.bl { left: -4px; }
.handle.tr, .handle.mr, .handle.br { right: -4px; }
.handle.tc, .handle.bc { left: 290px; }
.handle.ml, .handle.mr { top: 165px; }
.grip.tl, .grip.tc, .grip.tr { top: 0; }
.grip.bl, .grip.bc, .grip.br { bottom: 0; height: 3px; }
.grip.tl, .grip.ml, .grip.bl { left: 0; }
.grip.tr, .grip.mr, .grip.br { right: 0; width: 3px; }
.grip.tc, .grip.bc { left: 290px; width: 6px; }
.grip.ml, .grip.mr { top: 165px; height: 7px; }
.pointer { position: absolute; left: 1283px; top: 389px; }

.vscroll { width: 12px; flex: none; display: flex; flex-direction: column; align-items: center; }
.vscroll .split { width: 12px; height: 5px; border: solid #b8b8b8; border-width: 2px 3px; background: #000; }
.vscroll .thumb { width: 6px; height: 368px; margin-top: 5px; border-radius: 2px; background: #888; }
.hscroll { height: 12px; flex: none; display: flex; align-items: flex-start; justify-content: space-between; padding: 0 12px 0 4px; }
.hscroll .thumb { width: calc(46% + 4px); height: 6px; margin-top: 3px; border-radius: 2px; background: #888; }
.hscroll .split { width: 5px; height: 12px; border: solid #b8b8b8; border-width: 3px 2px; background: #000; }

.tabs { height: 25px; flex: none; display: flex; align-items: center; padding-left: 10px; gap: 9px; }
.tabs .add { margin: 0 0 0 6px; }
.tab { width: 65px; height: 25px; font-weight: 700; font-size: 13px; background: #fff; border-bottom: 3px solid #9a9a9a; }

footer { height: 21px; flex: none; display: flex; align-items: center; justify-content: space-between; border-top: 1px solid #b8b8b8; padding: 0 26px 0 10px; font-size: 12px; }
footer i { width: 1px; height: 14px; background: #dcdcdc; }
</style>
